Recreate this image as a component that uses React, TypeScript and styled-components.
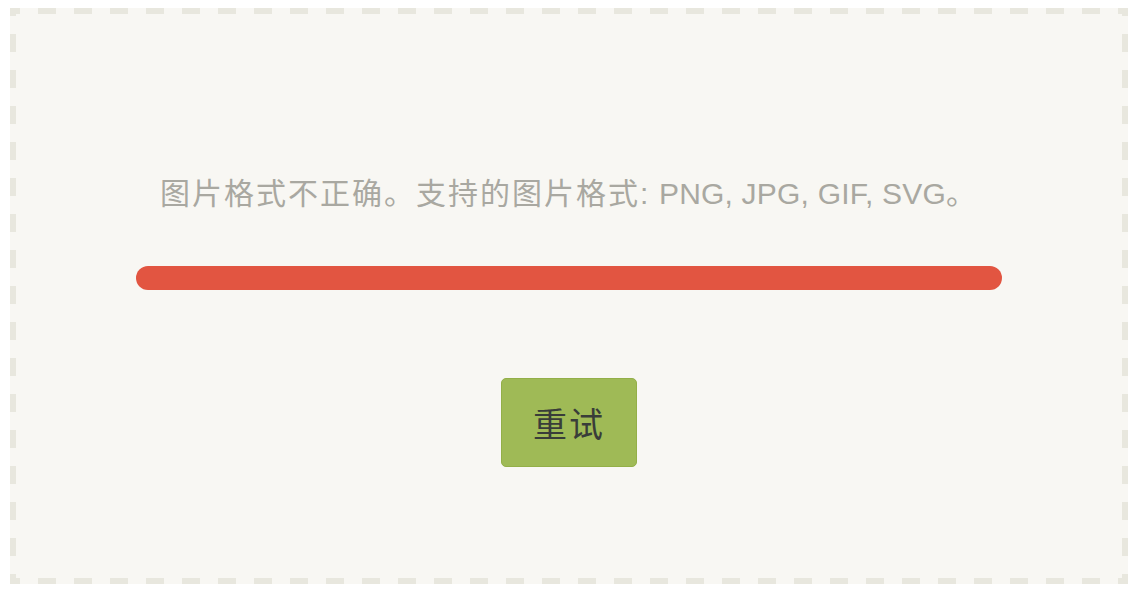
import styled, { createGlobalStyle } from 'styled-components';

const GlobalStyle = createGlobalStyle`
  html, body {
    margin: 0;
    padding: 0;
    background: #ffffff;
  }
  body {
    padding: 8px 12px 8px 10px;
    font-family: "Liberation Sans", "Noto Sans CJK SC", sans-serif;
  }
`;

const dash = '#e8e7de';

// dashed frame drawn as backgrounds so the dash rhythm (18px on / 18px off) is fixed
const Frame = styled.div`
  box-sizing: border-box;
  height: 576px;
  padding: 168px 6px 6px;
  background:
    linear-gradient(90deg, ${dash} 0 18px, transparent 18px 36px) 28px 0 / 36px 6px repeat-x,
    linear-gradient(90deg, ${dash} 0 18px, transparent 18px 36px) 28px 100% / 36px 6px repeat-x,
    linear-gradient(180deg, ${dash} 0 18px, transparent 18px 36px) 0 26px / 6px 36px repeat-y,
    linear-gradient(180deg, ${dash} 0 18px, transparent 18px 36px) 100% 26px / 6px 36px repeat-y,
    #f8f7f3;
  display: flex;
  flex-direction: column;
  align-items: center;
`;

const Message = styled.p`
  margin: 0;
  font-size: 30px;
  line-height: 36px;
  color: #a9a8a1;
  letter-spacing: 0.2px;
`;

const Wide = styled.span`
  letter-spacing: 2px;
`;

const ErrorBar = styled.div`
  margin-top: 54px;
  width: 866px;
  height: 24px;
  border-radius: 12px;
  background-color: #e25541;
`;

const RetryButton = styled.button`
  margin-top: 88px;
  box-sizing: border-box;
  width: 136px;
  height: 89px;
  border: 1px solid #93af48;
  border-radius: 5px;
  background-color: #9fba56;
  color: #393d39;
  font-family: "Liberation Sans", "Noto Sans CJK SC", sans-serif;
  font-size: 34px;
  letter-spacing: 2px;
  cursor: pointer;
`;

export default function App() {
  return (
    <>
      <GlobalStyle />
      <Frame>
        <Message>
          <Wide>图片格式不正确。支持的图片格式:</Wide> PNG, JPG, GIF, SVG<Wide>。</Wide>
        </Message>
        <ErrorBar />
        <RetryButton>重试</RetryButton>
      </Frame>
    </>
  );
}
